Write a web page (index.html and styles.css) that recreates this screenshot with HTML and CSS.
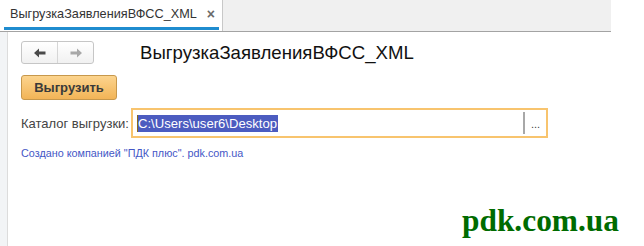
FILE: index.html
```html
<!DOCTYPE html>
<html lang="ru">
<head>
<meta charset="utf-8">
<title>ВыгрузкаЗаявленияВФСС_XML</title>
<link rel="stylesheet" href="styles.css">
</head>
<body>
<div class="app">
  <div class="tabbar">
    <div class="tab">
      <span class="tab-title">ВыгрузкаЗаявленияВФСС_XML</span>
      <span class="tab-close">×</span>
    </div>
  </div>
  <div class="main">
    <div class="strip"></div>
    <div class="content">
      <div class="head-row">
        <div class="nav">
          <span class="nav-btn">
            <svg width="12" height="10" viewBox="0 0 12 10"><path d="M0 5 L5 0.5 L5 3.5 L11.5 3.5 L11.5 6.5 L5 6.5 L5 9.5 Z" fill="#4a4a4a"/></svg>
          </span>
          <span class="nav-btn">
            <svg width="12" height="10" viewBox="0 0 12 10"><path d="M12 5 L7 0.5 L7 3.5 L0.5 3.5 L0.5 6.5 L7 6.5 L7 9.5 Z" fill="#a8a8a8"/></svg>
          </span>
        </div>
        <h1 class="title">ВыгрузкаЗаявленияВФСС_XML</h1>
      </div>
      <button class="export-btn" type="button">Выгрузить</button>
      <div class="field-row">
        <span class="label">Каталог выгрузки:</span>
        <div class="input">
          <div class="input-text"><span class="caret"></span><span class="sel">C:\Users\user6\Desktop</span></div>
          <span class="choose">...</span>
        </div>
      </div>
      <div class="link">Создано компанией "ПДК плюс". pdk.com.ua</div>
    </div>
  </div>
  <div class="watermark">pdk.com.ua</div>
</div>
</body>
</html>
```
FILE: styles.css
```css
* { box-sizing: border-box; }
html, body { margin: 0; padding: 0; background: #fff; }
body { font-family: "Liberation Sans", Arial, sans-serif; color: #333; }

.app {
  position: relative;
  width: 644px;
  height: 246px;
  overflow: hidden;
  display: flex;
  flex-direction: column;
}

.tabbar {
  width: 611px;
  height: 32px;
  background: #f0f0f0;
  border-bottom: 1px solid #a3a3a3;
  display: flex;
  flex: none;
}

.tab {
  width: 223px;
  height: 31px;
  background: #fff;
  border-right: 1px solid #c8c8c8;
  position: relative;
  display: flex;
  align-items: center;
  padding: 0 0 4px 10px;
}
.tab::after {
  content: "";
  position: absolute;
  left: 4px;
  right: 3px;
  bottom: 1px;
  height: 3px;
  background: #1f8ccf;
}
.tab-title { font-size: 12.7px; color: #333; }
.tab-close {
  margin-left: 10px;
  font-size: 14px;
  font-weight: bold;
  color: #6a6a6a;
  line-height: 1;
}

.main { flex: 1; display: flex; }
.strip {
  width: 8px;
  background: #f2f4f6;
  border-right: 1px solid #dcdcdc;
  flex: none;
}
.content {
  flex: 1;
  padding: 9px 0 0 13px;
  display: flex;
  flex-direction: column;
  align-items: flex-start;
}

.head-row { display: flex; align-items: center; }
.nav {
  width: 73px;
  height: 23px;
  border: 1px solid #c6c6c6;
  border-radius: 3px;
  background: linear-gradient(#ffffff, #f1f1f1);
  display: flex;
}
.nav-btn {
  flex: 1;
  display: flex;
  align-items: center;
  justify-content: center;
}
.nav-btn + .nav-btn { border-left: 1px solid #d6d6d6; }
.title {
  margin: 0 0 0 46px;
  font-size: 18.6px;
  font-weight: normal;
  color: #111;
  line-height: 22px;
}

.export-btn {
  margin-top: 11px;
  width: 96px;
  height: 25px;
  border: 1px solid #c7984c;
  border-radius: 3px;
  background: linear-gradient(#fcd48e, #f2b457);
  font-family: "Liberation Sans", Arial, sans-serif;
  font-size: 13px;
  font-weight: bold;
  color: #3a3a3a;
  padding: 0;
}

.field-row {
  margin-top: 8px;
  display: flex;
  align-items: center;
}
.label { font-size: 13px; color: #444; width: 110px; }
.input {
  width: 417px;
  height: 30px;
  border: 2px solid #f8c46e;
  display: flex;
  align-items: center;
}
.input-text {
  flex: 1;
  display: flex;
  align-items: center;
  padding-left: 4px;
}
.caret { width: 1px; height: 17px; background: #8a6a1a; }
.sel {
  background: #4c5cc0;
  color: #fff;
  font-size: 13.1px;
  line-height: 17px;
  padding: 0 1px 0 0;
}
.choose {
  width: 23px;
  height: 22px;
  border-left: 2px solid #a8a8a8;
  font-size: 11px;
  color: #444;
  display: flex;
  align-items: center;
  justify-content: center;
  padding-top: 2px;
}

.link {
  margin-top: 9px;
  font-size: 10.8px;
  line-height: 13px;
  color: #4557c6;
}

.watermark {
  position: absolute;
  left: 462px;
  top: 205px;
  font-family: "Liberation Serif", "Times New Roman", serif;
  font-weight: bold;
  font-size: 31.4px;
  line-height: 31px;
  color: #006b00;
}
```
